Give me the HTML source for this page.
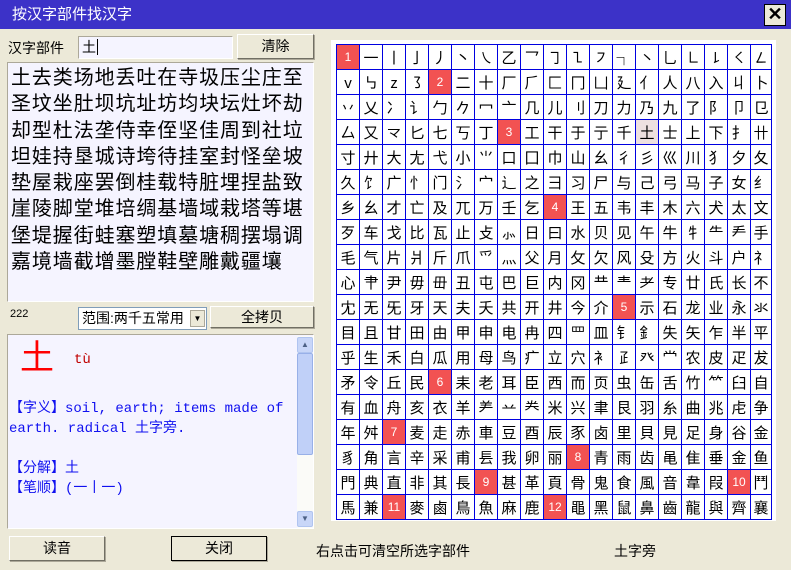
<!DOCTYPE html>
<html><head><meta charset="utf-8">
<style>
*{margin:0;padding:0;box-sizing:border-box}
body{width:791px;height:570px;background:#ece9d8;font-family:"Liberation Sans","Noto Sans CJK SC","WenQuanYi Zen Hei",sans-serif;position:relative;overflow:hidden;font-size:13px;color:#000}
.abs{position:absolute}
#title{left:0;top:0;width:791px;height:29px;background:#3c32c8;color:#fff;font-size:15px;line-height:29px;padding-left:12px}
#close{left:764px;top:4px;width:22px;height:22px;background:#ece9d8;border:1px solid #000;color:#000;font-size:18px;line-height:19px;text-align:center;font-weight:bold}
.btn{background:#ece9d8;border:1px solid;border-color:#fff #716f64 #716f64 #fff;box-shadow:1px 1px 0 #aca899;text-align:center;font-size:14px}
.inset{border:1px solid;border-color:#aca899 #fff #fff #aca899;background:#f5f4ff}
#res{font-size:20px;line-height:26.3px;letter-spacing:0.9px;padding:2px 0 0 3px;color:#000}
#grid{left:331px;top:40px;width:445px;height:481px;background:#fff}
table{position:absolute;left:336px;top:44px;border-collapse:collapse}
td{border:1px solid #0000e0;width:23px;height:25px;padding:0;text-align:center;font-size:15px;line-height:23px;color:#000;font-family:"Noto Sans CJK SC","WenQuanYi Zen Hei",sans-serif}
td.r{background:#f25252;color:#fff;font-size:12px;font-family:"Liberation Sans",sans-serif}
td.h{background:#ede0e0}
.blue{color:#1010f0}
</style></head><body>
<div id="title" class="abs">按汉字部件找汉字</div>
<div id="close" class="abs">✕</div>

<div class="abs" style="left:8px;top:38px;font-size:14px">汉字部件</div>
<div class="abs inset" style="left:78px;top:36px;width:155px;height:23px;background:#f5f4ff;font-size:14px;line-height:21px;padding-left:3px">土<span style="border-left:1px solid #000;margin-left:1px"></span></div>
<div class="abs btn" style="left:237px;top:34px;width:77px;height:25px;line-height:23px">清除</div>

<div id="res" class="abs inset" style="left:7px;top:62px;width:307px;height:240px">土去类场地丢吐在寺圾压尘庄至<br>圣坟坐肚坝坑址坊均块坛灶坏劫<br>却型杜法垄侍幸侄坚佳周到社垃<br>坦娃持垦城诗垮待挂室封怪垒坡<br>垫屋栽座罢倒桂载特脏埋捏盐致<br>崖陵脚堂堆培绸基墙域栽塔等堪<br>堡堤握街蛙塞塑填墓塘稠摆塌调<br>嘉境墙截增墨膛鞋壁雕戴疆壤</div>

<div class="abs" style="left:10px;top:308px;font-size:11px">222</div>
<div class="abs" style="left:78px;top:307px;width:129px;height:23px;background:#fff;border:1px solid #7f9db9;font-size:14px;line-height:21px;padding-left:3px">范围:两千五常用</div>
<div class="abs" style="left:190px;top:310px;width:15px;height:17px;background:#ece9d8;border:1px solid #aca899;font-size:8px;text-align:center;line-height:16px">▼</div>
<div class="abs btn" style="left:210px;top:306px;width:104px;height:22px;line-height:20px">全拷贝</div>

<div class="abs inset" style="left:7px;top:334px;width:307px;height:195px;background:#f5f4ff"></div>
<div class="abs" style="left:20px;top:336px;color:#f00;font-size:34px;line-height:44px">土</div>
<div class="abs" style="left:74px;top:352px;color:#c00000;font-size:14px;font-family:'Liberation Mono',monospace">tù</div>
<div class="abs blue" style="left:9px;top:399px;font-size:14px;line-height:20px;font-family:'Liberation Mono','Noto Sans CJK SC',monospace;width:290px">【字义】soil, earth; items made of earth. radical 土字旁.<br><br>【分解】土<br>【笔顺】(一丨一)</div>
<div class="abs" style="left:297px;top:336px;width:16px;height:192px;background:#fbfbf8"></div>
<div class="abs" style="left:297px;top:337px;width:16px;height:16px;background:#c8d6f8;border:1px solid #b0c4f0;border-radius:2px;font-size:8px;text-align:center;line-height:14px;color:#4d6185">▲</div>
<div class="abs" style="left:297px;top:353px;width:16px;height:102px;background:#c0d0f8;border:1px solid #98b0e8;border-radius:2px"></div>
<div class="abs" style="left:297px;top:511px;width:16px;height:16px;background:#c8d6f8;border:1px solid #b0c4f0;border-radius:2px;font-size:8px;text-align:center;line-height:14px;color:#4d6185">▼</div>

<div class="abs btn" style="left:9px;top:536px;width:96px;height:25px;line-height:23px">读音</div>
<div class="abs btn" style="left:171px;top:536px;width:96px;height:25px;line-height:23px;border:1px solid #000">关闭</div>
<div class="abs" style="left:316px;top:541px;font-size:14px">右点击可清空所选字部件</div>
<div class="abs" style="left:614px;top:541px;font-size:14px">土字旁</div>

<div id="grid" class="abs"></div>
<table id="t"></table>
<script>
var rows=[
"1 一 丨 亅 丿 丶 ㇏ 乙 乛 ㇆ ㇅ ㇇ ┐ ㇔ 乚 ㇗ ㇙ ㇛ ㇜",
"v ㇉ z ㇌ 2 二 十 厂 ⺁ 匚 冂 凵 廴 亻 人 八 入 丩 卜",
"丷 乂 冫 讠 勹 𠂊 冖 亠 几 儿 刂 刀 力 乃 九 了 阝 卩 㔾",
"厶 又 龴 匕 七 丂 丁 3 工 干 于 亍 千 土 士 上 下 扌 卄",
"寸 廾 大 尢 弋 小 ⺌ 口 囗 巾 山 幺 彳 彡 巛 川 犭 夕 夂",
"久 饣 广 忄 门 氵 宀 辶 之 彐 习 尸 与 己 弓 马 子 女 纟",
"乡 幺 才 亡 及 兀 万 壬 乞 4 王 五 韦 丰 木 六 犬 太 文",
"歹 车 戈 比 瓦 止 攴 ⺗ 日 曰 水 贝 见 午 牛 牜 ⺧ 龵 手",
"毛 气 片 爿 斤 爪 爫 灬 父 月 攵 欠 风 殳 方 火 斗 户 礻",
"心 肀 尹 毋 毌 丑 屯 巴 巨 内 冈 龷 龶 耂 专 廿 氏 长 不",
"冘 无 旡 牙 天 夫 夭 共 开 井 今 介 5 示 石 龙 业 永 氺",
"目 且 甘 田 由 甲 申 电 冉 四 罒 皿 钅 釒 失 矢 乍 半 平",
"乎 生 禾 白 瓜 用 母 鸟 疒 立 穴 衤 𤴔 癶 龸 农 皮 疋 犮",
"矛 令 丘 民 6 耒 老 耳 臣 西 而 页 虫 缶 舌 竹 ⺮ 臼 自",
"有 血 舟 亥 衣 羊 ⺶ 䒑 龹 米 兴 聿 艮 羽 糸 曲 兆 虍 争",
"年 舛 7 麦 走 赤 車 豆 酉 辰 豕 卤 里 貝 見 足 身 谷 金",
"豸 角 言 辛 采 甫 镸 我 卵 丽 8 青 雨 齿 黾 隹 垂 金 鱼",
"門 典 直 非 其 長 9 甚 革 頁 骨 鬼 食 風 音 韋 叚 10 鬥",
"馬 兼 11 麥 鹵 鳥 魚 麻 鹿 12 黽 黑 鼠 鼻 齒 龍 與 齊 襄"];
var h="";
rows.forEach(function(r,ri){h+="<tr>";r.split(" ").forEach(function(c,ci){
var cls=/^[0-9]+$/.test(c)?' class="r"':(ri==3&&ci==13?' class="h"':'');
var st=ci==18?' style="width:21px"':'';
h+="<td"+cls+st+">"+c+"</td>";});h+="</tr>";});
document.getElementById("t").innerHTML=h;
</script>
</body></html>
